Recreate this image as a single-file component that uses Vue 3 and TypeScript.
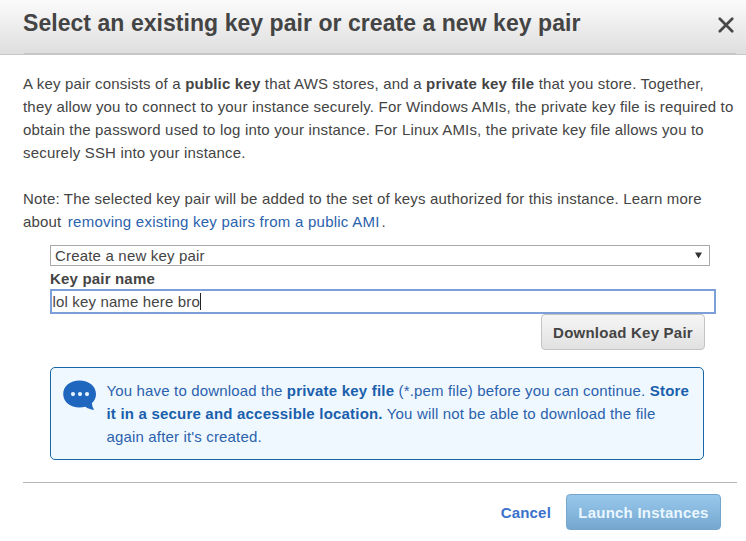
<script setup lang="ts">
import { ref } from 'vue'

const keyPairOption = ref<string>('Create a new key pair')
const keyName = ref<string>('lol key name here bro')
</script>

<template>
  <div class="dialog">
    <header class="header">
      <h1 class="title">Select an existing key pair or create a new key pair</h1>
      <button class="close" aria-label="Close">
        <svg width="16" height="16" viewBox="0 0 16 16">
          <path d="M1.8 1.8L14.2 14.2M14.2 1.8L1.8 14.2" fill="none" stroke="#484848" stroke-width="2.7" stroke-linecap="round" />
        </svg>
      </button>
      <div class="rule"></div>
    </header>

    <main class="body">
      <p class="text">
        A key pair consists of a <b>public key</b> that AWS stores, and a <b class="wide">private key file</b> that you store. Together,<br />
        they allow you to connect to your instance securely. For Windows AMIs, the private key file is required to<br />
        obtain the password used to log into your instance. For Linux AMIs, the private key file allows you to<br />
        securely SSH into your instance.
      </p>
      <p class="text note">
        Note: The selected key pair will be added to the set of keys authorized for this instance. Learn more<br />
        about <a class="link">removing existing key pairs from a public AMI</a>.
      </p>

      <section class="form">
        <div class="select">
          <span>{{ keyPairOption }}</span>
          <svg width="7" height="7" viewBox="0 0 7 7"><path d="M0 0.5H7L3.5 6.5Z" fill="#333" /></svg>
        </div>
        <div class="label">Key pair name</div>
        <div class="input"><span>{{ keyName }}</span><i class="caret"></i></div>
        <div class="download-row"><button class="btn">Download Key Pair</button></div>

        <div class="info">
          <svg class="bubble" width="34" height="31" viewBox="0 0 34 31">
            <path d="M16.5 0.5C25.8 0.5 33 6.2 33 14C33 17.8 31.4 21 29 23.1C29 25.8 29.8 28 31.2 30C27.6 29.5 24.5 28.4 22.4 26.7C20.6 27.2 18.6 27.5 16.5 27.5C7.2 27.5 0.2 21.8 0.2 14C0.2 6.2 7.2 0.5 16.5 0.5Z" fill="#1f66bf" />
            <g fill="#e6f4ff"><circle cx="10" cy="14.1" r="2.1" /><circle cx="17" cy="14.1" r="2.1" /><circle cx="24" cy="14.1" r="2.1" /></g>
          </svg>
          <p class="info-text">
            You have to download the <b>private key file</b> (*.pem file) before you can continue. <b>Store</b><br />
            <b>it in a secure and accessible location.</b> You will not be able to download the file<br />
            again after it's created.
          </p>
        </div>
      </section>
    </main>

    <footer class="footer">
      <a class="cancel">Cancel</a>
      <button class="btn primary">Launch Instances</button>
    </footer>
  </div>
</template>

<style>
body {
  margin: 0;
  background: #fff;
}
</style>

<style scoped>
.dialog {
  width: 746px;
  height: 541px;
  overflow: hidden;
  box-sizing: border-box;
  background: #fff;
  color: #444;
  font-family: "Liberation Sans", Arial, sans-serif;
  font-size: 15px;
  line-height: 23px;
  letter-spacing: 0.185px;
}
.header {
  position: relative;
  display: flex;
  justify-content: space-between;
  height: 55px;
  box-sizing: border-box;
  padding: 8px 12px 0 23px;
  border-bottom: 1px solid #c8c8c8;
  background: linear-gradient(#fbfbfb, #dedede);
}
.rule {
  position: absolute;
  left: 24px;
  right: 10px;
  bottom: 0;
  height: 1px;
  background: #c4c4c4;
}
.title {
  margin: 0;
  font-size: 23px;
  line-height: 30px;
  font-weight: bold;
  letter-spacing: 0.05px;
  white-space: nowrap;
}
.close {
  display: flex;
  width: 16px;
  height: 16px;
  margin-top: 9px;
  padding: 0;
  border: 0;
  background: none;
}
.body {
  padding: 17px 0 0 23px;
}
.text {
  margin: 0;
  white-space: nowrap;
}
.wide {
  letter-spacing: 0.25px;
}
.note {
  margin-top: 23px;
}
.link {
  margin: 0 2px;
  color: #2a62ad;
  letter-spacing: 0.24px;
}
.form {
  width: 665px;
  padding: 12px 0 0 27px;
}
.select {
  display: flex;
  align-items: center;
  justify-content: space-between;
  width: 660px;
  height: 21px;
  box-sizing: border-box;
  padding: 0 7px 0 4px;
  border: 1px solid #a9a9a9;
}
.label {
  height: 23px;
  font-weight: bold;
  line-height: 25px;
}
.input {
  display: flex;
  align-items: center;
  width: 666px;
  height: 25px;
  box-sizing: border-box;
  padding-left: 0.5px;
  border: 2px solid #7c9fda;
  letter-spacing: 0.15px;
}
.caret {
  width: 1px;
  height: 17px;
  background: #222;
}
.download-row {
  display: flex;
  justify-content: flex-end;
  width: 655px;
}
.btn {
  height: 36px;
  width: 164px;
  box-sizing: border-box;
  padding: 0;
  border: 1px solid #c4c4c4;
  border-radius: 4px;
  background: linear-gradient(#f6f6f6, #e1e1e1);
  color: #444;
  font: bold 15px "Liberation Sans", Arial, sans-serif;
  letter-spacing: 0.23px;
  white-space: nowrap;
}
.info {
  display: flex;
  width: 654px;
  height: 93px;
  box-sizing: border-box;
  margin-top: 17px;
  padding: 12px 0 0 12px;
  border: 1px solid #1766a8;
  border-radius: 5px;
  background: #f0f8ff;
  color: #2a62ad;
}
.bubble {
  flex: none;
}
.info-text {
  margin: -1px 0 0 9.5px;
  letter-spacing: 0.16px;
  white-space: nowrap;
}
.info-text b {
  color: #1a5fac;
  letter-spacing: 0.2px;
}
.footer {
  display: flex;
  align-items: center;
  justify-content: flex-end;
  gap: 15px;
  margin: 22px 9px 0 23px;
  padding: 11px 16px 0 0;
  border-top: 1px solid #b5b8b0;
}
.cancel {
  color: #3a72cb;
  font-weight: bold;
}
.primary {
  width: 155px;
  border-color: #76a5cb;
  background: linear-gradient(#98c8ec, #76a7cf);
  color: #eaf7ff;
}
</style>
